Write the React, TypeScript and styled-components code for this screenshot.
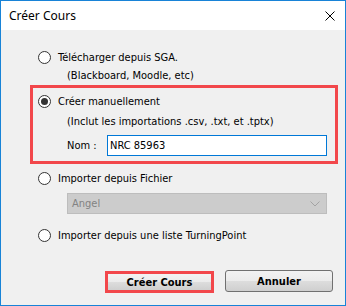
import styled, { createGlobalStyle } from "styled-components";

const GlobalStyle = createGlobalStyle`
  html, body {
    margin: 0;
    padding: 0;
    background: #fff;
  }
  body {
    font-family: "DejaVu Sans Condensed", "DejaVu Sans", sans-serif;
    font-stretch: condensed;
    font-size: 11px;
    color: #000;
  }
`;

const App = () => {
  return (
    <>
      <GlobalStyle />
      <Window>
        <TitleBar>
          <span>Créer Cours</span>
          <svg width="10" height="10" viewBox="0 0 10 10">
            <path d="M0.5 0.5 L9.5 9.5 M9.5 0.5 L0.5 9.5" stroke="#000" strokeWidth="1" fill="none" />
          </svg>
        </TitleBar>
        <Body>
          <Section>
            <RadioRow>
              <Radio />
              Télécharger depuis SGA.
            </RadioRow>
            <Sub $gap={5}>(Blackboard, Moodle, etc)</Sub>
          </Section>
          <Section $highlight>
            <RadioRow>
              <Radio $checked />
              Créer manuellement
            </RadioRow>
            <Sub $gap={7}>(Inclut les importations .csv, .txt, et .tptx)</Sub>
            <NameRow>
              <NameLabel>Nom :</NameLabel>
              <NameInput value="NRC 85963" readOnly />
            </NameRow>
          </Section>
          <Section $gap={5}>
            <RadioRow>
              <Radio />
              Importer depuis Fichier
            </RadioRow>
            <Select>
              <span>Angel</span>
              <svg width="10" height="6" viewBox="0 0 10 6">
                <path d="M0.5 0.5 L5 5 L9.5 0.5" stroke="#a3a3a3" strokeWidth="1" fill="none" />
              </svg>
            </Select>
          </Section>
          <Section $gap={9}>
            <RadioRow>
              <Radio />
              Importer depuis une liste TurningPoint
            </RadioRow>
          </Section>
          <ButtonRow>
            <Button $highlight>Créer Cours</Button>
            <Button>Annuler</Button>
          </ButtonRow>
        </Body>
      </Window>
    </>
  );
};

export default App;

const Window = styled.div`
  box-sizing: border-box;
  width: 346px;
  height: 306px;
  border: 1px solid #1883d7;
  display: flex;
  flex-direction: column;
  background: #f0f0f0;
`;

const TitleBar = styled.div`
  height: 29px;
  flex: none;
  background: #fff;
  display: flex;
  align-items: center;
  justify-content: space-between;
  padding: 0 10px 0 8px;
  font-family: "Noto Sans", sans-serif;
  font-stretch: normal;
  font-size: 12px;
  svg {
    display: block;
  }
`;

const Body = styled.div`
  flex: 1;
  display: flex;
  flex-direction: column;
  padding: 18px 7px 0 29px;
`;

const Section = styled.div<{ $highlight?: boolean; $gap?: number }>`
  margin-top: ${(p) => p.$gap ?? 0}px;
  border: 3px solid ${(p) => (p.$highlight ? "#f2474b" : "transparent")};
  padding: ${(p) => (p.$highlight ? "7px 5px 5px" : "0 5px")};
`;

const RadioRow = styled.div`
  display: flex;
  align-items: center;
  gap: 7px;
  height: 13px;
  white-space: nowrap;
`;

const Radio = styled.span<{ $checked?: boolean }>`
  box-sizing: border-box;
  flex: none;
  width: 13px;
  height: 13px;
  border: 1px solid #333;
  border-radius: 50%;
  background: #fff;
  display: grid;
  place-items: center;
  &::after {
    content: "";
    width: 7px;
    height: 7px;
    border-radius: 50%;
    background: ${(p) => (p.$checked ? "#333" : "transparent")};
  }
`;

const Sub = styled.div<{ $gap: number }>`
  margin-top: ${(p) => p.$gap}px;
  padding-left: 29px;
  line-height: 13px;
  white-space: nowrap;
`;

const NameRow = styled.div`
  margin-top: 7px;
  display: flex;
  align-items: center;
  padding: 0 3px 0 29px;
`;

const NameLabel = styled.span`
  width: 40px;
  flex: none;
`;

const NameInput = styled.input`
  box-sizing: border-box;
  flex: 1;
  min-width: 0;
  height: 21px;
  margin: 0;
  border: 1px solid #0078d7;
  background: #fff;
  padding: 0 2px;
  font: inherit;
  color: #000;
  outline: none;
`;

const Select = styled.div`
  box-sizing: border-box;
  margin: 8px 3px 0 29px;
  height: 21px;
  background: #cccccc;
  border: 1px solid #bdbdbd;
  display: flex;
  align-items: center;
  justify-content: space-between;
  padding: 0 6px 0 4px;
  color: #838383;
  svg {
    display: block;
  }
`;

const ButtonRow = styled.div`
  margin: 25px 5px 0 0;
  display: flex;
  justify-content: flex-end;
  align-items: flex-start;
  gap: 11px;
`;

const Button = styled.button<{ $highlight?: boolean }>`
  box-sizing: border-box;
  width: ${(p) => (p.$highlight ? 109 : 108)}px;
  height: 22px;
  margin: ${(p) => (p.$highlight ? "1px 0 0" : "0")};
  padding: 0;
  border: ${(p) => (p.$highlight ? "3px solid #f2474b" : "1px solid #707070")};
  border-radius: ${(p) => (p.$highlight ? 0 : 3)}px;
  background: linear-gradient(#f2f2f2 0%, #ebebeb 50%, #dddddd 50%, #cfcfcf 100%);
  font: inherit;
  font-weight: bold;
  color: #000;
`;
